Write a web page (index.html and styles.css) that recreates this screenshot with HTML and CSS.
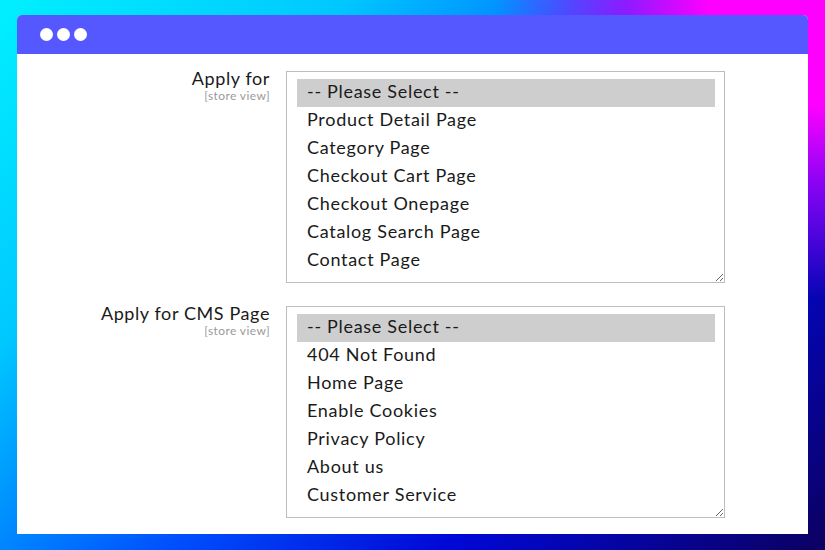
FILE: index.html
```html
<!DOCTYPE html>
<html lang="en">
<head>
    <meta charset="UTF-8">
    <meta name="viewport" content="width=device-width, initial-scale=1.0">
    <title>Page Conditions</title>
    <link rel="stylesheet" href="styles.css">
</head>
<body>
    <div class="window">
        <div class="titlebar">
            <span class="dot"></span>
            <span class="dot"></span>
            <span class="dot"></span>
        </div>
        <div class="content">
            <div class="form-row">
                <div class="label-col">
                    <div class="label">Apply for</div>
                    <div class="scope">[store view]</div>
                </div>
                <div class="listbox">
                    <div class="option selected">-- Please Select --</div>
                    <div class="option">Product Detail Page</div>
                    <div class="option">Category Page</div>
                    <div class="option">Checkout Cart Page</div>
                    <div class="option">Checkout Onepage</div>
                    <div class="option">Catalog Search Page</div>
                    <div class="option">Contact Page</div>
                </div>
            </div>
            <div class="form-row">
                <div class="label-col">
                    <div class="label">Apply for CMS Page</div>
                    <div class="scope">[store view]</div>
                </div>
                <div class="listbox">
                    <div class="option selected">-- Please Select --</div>
                    <div class="option">404 Not Found</div>
                    <div class="option">Home Page</div>
                    <div class="option">Enable Cookies</div>
                    <div class="option">Privacy Policy</div>
                    <div class="option">About us</div>
                    <div class="option">Customer Service</div>
                </div>
            </div>
        </div>
    </div>
</body>
</html>
```

FILE: styles.css
```css
html, body {
    height: 100%;
}
body {
    margin: 0;
    padding: 15px 17px 16px 17px;
    box-sizing: border-box;
    font-family: 'Lato', 'Liberation Sans', sans-serif;
    color: #1a1a1a;
    background:
        radial-gradient(ellipse 330px 300px at 100% 0%, #ff00ff 0%, #ff00ff 35%, rgba(190, 0, 255, 0.75) 60%, rgba(150, 0, 255, 0) 100%),
        linear-gradient(135deg, #00f0ff 0%, #00c8ff 25%, #0050ff 52%, #0008d8 72%, #0c0060 100%);
    overflow: hidden;
}
.window {
    height: 100%;
    background-color: #fff;
    border-radius: 5px 5px 0 0;
    display: flex;
    flex-direction: column;
}
.titlebar {
    height: 39px;
    flex-shrink: 0;
    background-color: #5558ff;
    border-radius: 5px 5px 0 0;
    display: flex;
    align-items: center;
    gap: 4px;
    padding-left: 23px;
}
.dot {
    width: 13px;
    height: 13px;
    border-radius: 50%;
    background-color: #fff;
}
.content {
    padding-top: 17px;
    display: flex;
    flex-direction: column;
    gap: 23px;
}
.form-row {
    display: flex;
    align-items: flex-start;
    gap: 16px;
}
.label-col {
    width: 253px;
    text-align: right;
    margin-top: -3px;
}
.label {
    font-size: 18px;
    line-height: 21px;
    letter-spacing: 0.6px;
    color: #1a1a1a;
}
.scope {
    font-size: 12px;
    line-height: 13px;
    letter-spacing: 0.4px;
    color: #9a9a9a;
}
.listbox {
    width: 439px;
    height: 212px;
    box-sizing: border-box;
    border: 1px solid #bdbdbd;
    padding: 7px 9px 8px 10px;
    overflow: auto;
    resize: both;
}
.option {
    height: 28px;
    line-height: 24px;
    padding-left: 10px;
    font-size: 18px;
    letter-spacing: 0.7px;
    color: #1a1a1a;
    white-space: nowrap;
}
.option.selected {
    background-color: #cecece;
}
```
